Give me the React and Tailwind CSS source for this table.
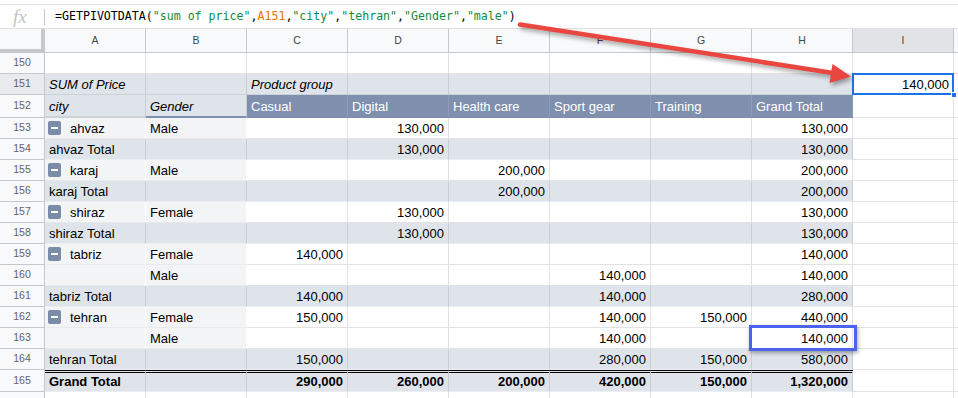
const KIND = {
  plain: "bg-white border-r-[#e2e2e2] border-b-[#e2e2e2]",
  label: "bg-[#f3f4f6] border-r-white border-b-[#e7e9ed]",
  total: "bg-[#dfe3ea] border-r-[#c9cdd5] border-b-[#eceef2]",
  head: "bg-[#dfe3ea] border-r-[#c9cdd5] border-b-[#cdd1d8]",
  colhead: "bg-[#7f90ae] text-white border-r-[#8d9cb8] border-b-[#7f90ae]",
};

const COLS = ["A", "B", "C", "D", "E", "F", "G", "H", "I"];

function Minus() {
  return (
    <span className="self-center mb-[-2px] mr-[9px] w-[13px] h-[14px] rounded-[2px] bg-[#7b8ca9] flex items-center justify-center shrink-0">
      <span className="w-[7px] h-[2px] bg-white" />
    </span>
  );
}

function Cell({ kind = "plain", right, italic, bold, toggle, thick, double, children }) {
  return (
    <div
      className={`relative w-[101px] shrink-0 flex items-end pb-[2px] px-[4px] leading-[15px] whitespace-nowrap border-r ${
        thick ? "border-b-2" : "border-b"
      } ${double ? "border-t-[3px] border-double border-t-black" : ""} ${KIND[kind]} ${
        right ? "justify-end" : "justify-start"
      } ${italic ? "italic" : ""} ${bold ? "font-bold" : ""} ${toggle ? "pl-[3px]" : ""}`}
    >
      {toggle && <Minus />}
      {children}
    </div>
  );
}

function RowHead({ n, active }) {
  return (
    <div
      className={`w-[45px] shrink-0 flex items-center justify-center border-r border-b border-[#c4c7cc] text-[10.5px] text-[#5f6368] ${
        active ? "bg-[#e8eaed]" : "bg-[#f8f9fa]"
      }`}
    >
      {n}
    </div>
  );
}

// pivot rows: [row number, city, gender, C..H, kind]
const ROWS = [
  [153, "ahvaz", "Male", ["", "130,000", "", "", "", "130,000"], "data"],
  [154, "ahvaz Total", "", ["", "130,000", "", "", "", "130,000"], "total"],
  [155, "karaj", "Male", ["", "", "200,000", "", "", "200,000"], "data"],
  [156, "karaj Total", "", ["", "", "200,000", "", "", "200,000"], "total"],
  [157, "shiraz", "Female", ["", "130,000", "", "", "", "130,000"], "data"],
  [158, "shiraz Total", "", ["", "130,000", "", "", "", "130,000"], "total"],
  [159, "tabriz", "Female", ["140,000", "", "", "", "", "140,000"], "data"],
  [160, "", "Male", ["", "", "", "140,000", "", "140,000"], "data"],
  [161, "tabriz Total", "", ["140,000", "", "", "140,000", "", "280,000"], "total"],
  [162, "tehran", "Female", ["150,000", "", "", "140,000", "150,000", "440,000"], "data"],
  [163, "", "Male", ["", "", "", "140,000", "", "140,000"], "data"],
  [164, "tehran Total", "", ["150,000", "", "", "280,000", "150,000", "580,000"], "total"],
];

const GROUPS = ["Casual", "Digital", "Health care", "Sport gear", "Training", "Grand Total"];

function Arrow() {
  return (
    <svg
      className="absolute left-0 top-0 pointer-events-none z-20 drop-shadow-[2px_3px_2px_rgba(0,0,0,0.35)]"
      width="958"
      height="398"
    >
      <line x1="520" y1="24.5" x2="833" y2="73" stroke="#e9463f" strokeWidth="4.5" strokeLinecap="round" />
      <polygon points="851,76.5 832.5,64 829.5,83" fill="#e9463f" />
    </svg>
  );
}

export default function App() {
  return (
    <div className="relative w-[958px] h-[398px] overflow-hidden bg-white text-[13px] text-black font-['Liberation_Sans',Arial,sans-serif]">
      <Arrow />
      <div className="h-[4px]" />
      <div className="h-[25px] flex items-center border-t border-b border-[#e0e0e0]">
        <div className="w-[45px] shrink-0 flex items-center">
          <span className="pl-[13px] text-[19px] italic text-[#c4c4c4] font-['Liberation_Serif',serif] leading-none">fx</span>
          <span className="ml-auto w-px h-[16px] bg-[#c8c8c8]" />
        </div>
        <div className="pl-[10px] text-[11.6px] font-['DejaVu_Sans_Mono',monospace] whitespace-nowrap">
          <span>=GETPIVOTDATA(</span>
          <span className="text-[#118a3e]">"sum of price"</span>
          <span>,</span>
          <span className="text-[#e8710a]">A151</span>
          <span>,</span>
          <span className="text-[#118a3e]">"city"</span>
          <span>,</span>
          <span className="text-[#118a3e]">"tehran"</span>
          <span>,</span>
          <span className="text-[#118a3e]">"Gender"</span>
          <span>,</span>
          <span className="text-[#118a3e]">"male"</span>
          <span>)</span>
        </div>
      </div>

      {/* column headers */}
      <div className="flex h-[24px]">
        <div className="w-[45px] shrink-0 bg-[#f8f9fa] border-r-4 border-b-4 border-[#c4c7cc]" />
        {COLS.map((c) => (
          <div
            key={c}
            className={`w-[101px] shrink-0 flex items-center justify-center border-r border-b border-[#c4c7cc] text-[10.5px] text-[#444746] ${
              c === "I" ? "bg-[#e1e3e6]" : "bg-[#f8f9fa]"
            }`}
          >
            {c}
          </div>
        ))}
        <div className="w-[101px] shrink-0 bg-[#f8f9fa] border-b border-[#c4c7cc]" />
      </div>

      {/* 150 */}
      <div className="flex h-[21px]">
        <RowHead n={150} />
        {COLS.map((c) => (
          <Cell key={c} />
        ))}
        <Cell />
      </div>

      {/* 151 */}
      <div className="flex h-[21px]">
        <RowHead n={151} active />
        <Cell kind="head" italic>SUM of Price</Cell>
        <Cell kind="head" />
        <Cell kind="head" italic>Product group</Cell>
        <Cell kind="head" />
        <Cell kind="head" />
        <Cell kind="head" />
        <Cell kind="head" />
        <Cell kind="head" />
        <Cell right>
          140,000
          <div className="absolute -left-px -top-px w-[102px] h-[22px] border-2 border-[#1a73e8] z-10" />
          <div className="absolute -right-[4px] -bottom-[4px] w-[6px] h-[6px] bg-[#1a73e8] border border-white z-10" />
        </Cell>
        <Cell />
      </div>

      {/* 152 */}
      <div className="flex h-[23px]">
        <RowHead n={152} />
        <Cell kind="head" italic thick>
          <span>city</span>
        </Cell>
        <div className="w-[101px] shrink-0 flex items-end pb-[2px] px-[4px] leading-[15px] italic bg-[#dfe3ea] border-r border-r-[#c9cdd5] border-b-2 border-b-[#7f90ae]">
          Gender
        </div>
        {GROUPS.map((g) => (
          <Cell key={g} kind="colhead" thick>
            {g}
          </Cell>
        ))}
        <Cell />
        <Cell />
      </div>

      {ROWS.map(([n, city, gender, vals, kind]) => {
        const isTotal = kind === "total";
        return (
          <div key={n} className="flex h-[21px]">
            <RowHead n={n} />
            <Cell kind={isTotal ? "total" : "label"} toggle={!isTotal && city !== ""}>
              {city}
            </Cell>
            <Cell kind={isTotal ? "total" : "label"}>{gender}</Cell>
            {vals.map((v, i) => (
              <Cell key={i} kind={isTotal ? "total" : "plain"} right>
                {v}
                {n === 163 && i === 5 && (
                  <div className="absolute -left-[3px] -top-[3px] w-[108px] h-[26px] border-[3px] border-[#4b63ef] shadow-[1px_2px_4px_rgba(0,0,0,0.35)] z-10" />
                )}
              </Cell>
            ))}
            <Cell />
            <Cell />
          </div>
        );
      })}

      {/* 165 */}
      <div className="flex h-[22px]">
        <RowHead n={165} />
        <Cell kind="total" bold double>Grand Total</Cell>
        <Cell kind="total" double />
        {["290,000", "260,000", "200,000", "420,000", "150,000", "1,320,000"].map((v, i) => (
          <Cell key={i} kind="total" bold right double>
            {v}
          </Cell>
        ))}
        <Cell />
        <Cell />
      </div>

      {/* 166, only its top edge is in view */}
      <div className="flex h-[21px]">
        <RowHead n="" />
        {COLS.map((c) => (
          <Cell key={c} />
        ))}
        <Cell />
      </div>
    </div>
  );
}
